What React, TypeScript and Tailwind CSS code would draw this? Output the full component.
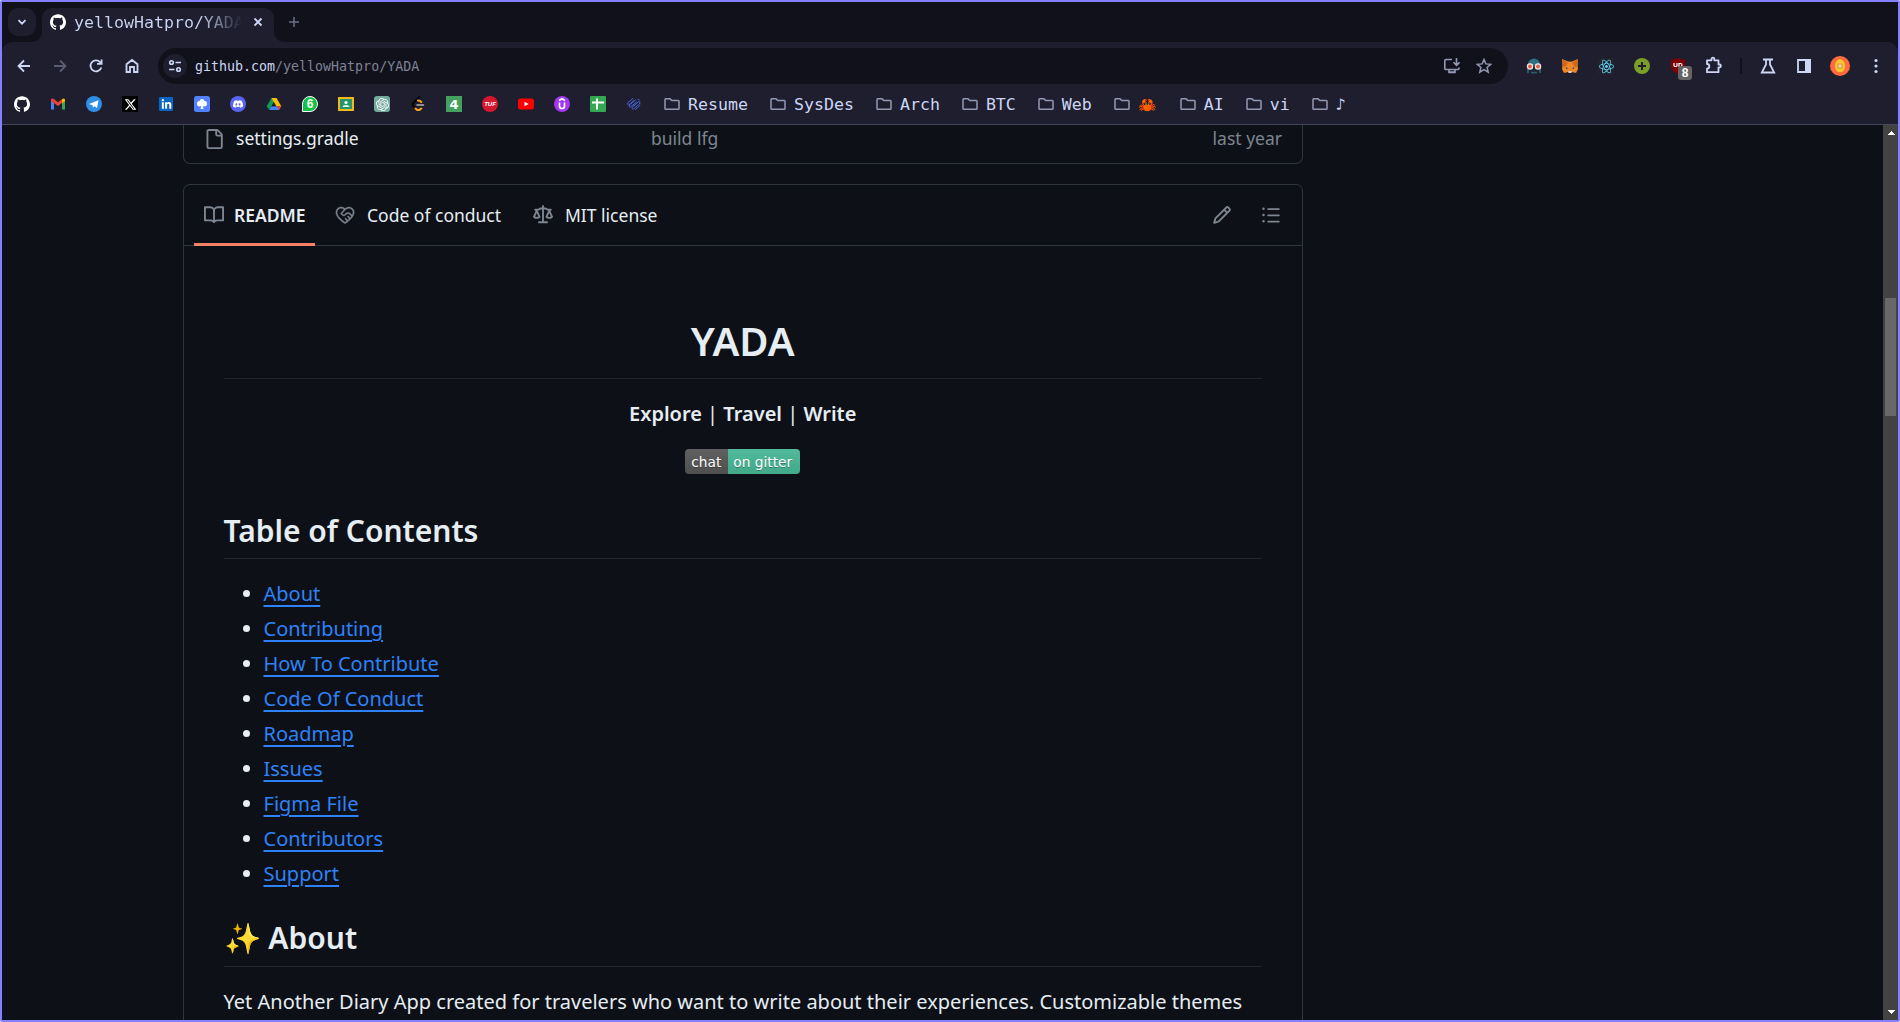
import type { ReactNode } from "react";
import { GoCodeOfConduct } from "react-icons/go";
import { SiDiscord, SiGithub, SiOpenai, SiReact } from "react-icons/si";
import { FaLinkedinIn } from "react-icons/fa";
import { FaXTwitter } from "react-icons/fa6";

const mono = "font-['DejaVu_Sans_Mono','Liberation_Mono',monospace]";

const octicons = {
  book: "M0 1.75A.75.75 0 0 1 .75 1h4.253c1.227 0 2.317.59 3 1.501A3.743 3.743 0 0 1 11.006 1h4.245a.75.75 0 0 1 .75.75v10.5a.75.75 0 0 1-.75.75h-4.507a2.25 2.25 0 0 0-1.591.659l-.622.621a.75.75 0 0 1-1.06 0l-.622-.621A2.25 2.25 0 0 0 5.258 13H.75a.75.75 0 0 1-.75-.75Zm7.251 10.324.004-5.073-.002-2.253A2.25 2.25 0 0 0 5.003 2.5H1.5v9h3.757a3.75 3.75 0 0 1 1.994.574ZM8.755 4.75l-.004 7.322a3.752 3.752 0 0 1 1.992-.572H14.5v-9h-3.495a2.25 2.25 0 0 0-2.25 2.25Z",
  file: "M2 1.75C2 .784 2.784 0 3.75 0h6.586c.464 0 .909.184 1.237.513l2.914 2.914c.329.328.513.773.513 1.237v9.586A1.75 1.75 0 0 1 13.25 16h-9.5A1.75 1.75 0 0 1 2 14.25Zm1.75-.25a.25.25 0 0 0-.25.25v12.5c0 .138.112.25.25.25h9.5a.25.25 0 0 0 .25-.25V6h-2.75A1.75 1.75 0 0 1 9 4.25V1.5Zm6.75.062V4.25c0 .138.112.25.25.25h2.688l-.011-.013-2.914-2.914-.013-.011Z",
  pencil: "M11.013 1.427a1.75 1.75 0 0 1 2.474 0l1.086 1.086a1.75 1.75 0 0 1 0 2.474l-8.61 8.61c-.21.21-.47.364-.756.445l-3.251.93a.75.75 0 0 1-.927-.928l.929-3.25c.081-.286.235-.547.445-.758l8.61-8.61Zm.176 4.823L9.75 4.81l-6.286 6.287a.253.253 0 0 0-.064.108l-.558 1.953 1.953-.558a.253.253 0 0 0 .108-.064Zm1.238-3.763a.25.25 0 0 0-.354 0L10.811 3.75l1.439 1.44 1.263-1.263a.25.25 0 0 0 0-.354Z",
  list: "M5.75 2.5h8.5a.75.75 0 0 1 0 1.5h-8.5a.75.75 0 0 1 0-1.5Zm0 5h8.5a.75.75 0 0 1 0 1.5h-8.5a.75.75 0 0 1 0-1.5Zm0 5h8.5a.75.75 0 0 1 0 1.5h-8.5a.75.75 0 0 1 0-1.5ZM2 14a1 1 0 1 1 0-2 1 1 0 0 1 0 2Zm1-6a1 1 0 1 1-2 0 1 1 0 0 1 2 0ZM2 4a1 1 0 1 1 0-2 1 1 0 0 1 0 2Z",
  law: "M8.75.75V2h.985c.304 0 .603.08.867.231l1.29.736c.038.022.08.033.124.033h2.234a.75.75 0 0 1 0 1.5h-.427l2.111 4.692a.75.75 0 0 1-.154.838l-.53-.53.529.531-.001.002-.002.002-.006.006-.006.005-.01.01-.045.04c-.21.176-.441.327-.686.45C14.556 10.78 13.88 11 13 11a4.498 4.498 0 0 1-2.023-.454 3.544 3.544 0 0 1-.686-.45l-.045-.04-.016-.015-.006-.006-.004-.004v-.001a.75.75 0 0 1-.154-.838L12.178 4.5h-.162c-.305 0-.604-.079-.868-.231l-1.29-.736a.245.245 0 0 0-.124-.033H8.75V13h2.5a.75.75 0 0 1 0 1.5h-6.5a.75.75 0 0 1 0-1.5h2.5V3.5h-.984a.245.245 0 0 0-.124.033l-1.289.737c-.265.15-.564.23-.869.23h-.162l2.112 4.692a.75.75 0 0 1-.154.838l-.53-.53.529.531-.001.002-.002.002-.006.006-.016.015-.045.04c-.21.176-.441.327-.686.45C4.556 10.78 3.88 11 3 11a4.498 4.498 0 0 1-2.023-.454 3.544 3.544 0 0 1-.686-.45l-.045-.04-.016-.015-.006-.006-.004-.004v-.001a.75.75 0 0 1-.154-.838L2.178 4.5H1.75a.75.75 0 0 1 0-1.5h2.234a.249.249 0 0 0 .125-.033l1.288-.737c.265-.15.564-.23.869-.23h.984V.75a.75.75 0 0 1 1.5 0Zm2.945 8.477c.285.135.718.273 1.305.273s1.02-.138 1.305-.273L13 6.327Zm-10 0c.285.135.718.273 1.305.273s1.02-.138 1.305-.273L3 6.327Z",
};

function Octicon({ name, className = "" }: { name: keyof typeof octicons; className?: string }) {
  return (
    <svg width="20" height="20" viewBox="0 0 16 16" fill="currentColor" className={`shrink-0 text-[#7d8590] ${className}`}>
      <path d={octicons[name]} />
    </svg>
  );
}

function Stroke({ children, className = "", w = 16, sw = 1.8 }: { children: ReactNode; className?: string; w?: number; sw?: number }) {
  return (
    <svg width={w} height={w} viewBox={`0 0 ${w} ${w}`} fill="none" stroke="currentColor" strokeWidth={sw} className={`shrink-0 ${className}`}>
      {children}
    </svg>
  );
}

function TabStrip() {
  return (
    <div className="flex h-10 shrink-0 items-start bg-[#11111b] pl-1.5 pt-1.5">
      <button className="flex size-7 items-center justify-center rounded-[10px] bg-[#1e1e2e] text-[#cdd6f4]">
        <Stroke w={10}>
          <path d="M1.5 3.2 5 6.7l3.5-3.5" />
        </Stroke>
      </button>
      <div className="relative ml-1.5 flex h-[34px] w-[232px] items-center rounded-t-[10px] bg-[#1e1e2e] pb-[6px] pl-2">
        <svg className="absolute -left-2.5 bottom-0 text-[#1e1e2e]" width="10" height="10">
          <path d="M10 0v10H0A10 10 0 0 0 10 0Z" fill="currentColor" />
        </svg>
        <svg className="absolute -right-2.5 bottom-0 text-[#1e1e2e]" width="10" height="10">
          <path d="M0 0v10h10A10 10 0 0 1 0 0Z" fill="currentColor" />
        </svg>
        <SiGithub size={16} className="shrink-0 text-white" />
        <span className={`${mono} ml-2 w-[168px] overflow-hidden whitespace-nowrap bg-gradient-to-r from-[#cdd6f4] from-75% to-transparent to-100% bg-clip-text pt-px text-[16.6px] leading-7 text-transparent`}>
          yellowHatpro/YADA
        </span>
        <Stroke w={10} className="ml-[11px] text-[#cdd6f4]">
          <path d="m1.5 1.5 7 7m0-7-7 7" />
        </Stroke>
      </div>
      <Stroke w={10} sw={1.5} className="ml-[15px] mt-[9px] text-[#6c7086]">
        <path d="M5 0v10M0 5h10" />
      </Stroke>
    </div>
  );
}

function Extensions() {
  return (
    <div className="flex items-center">
      <svg width="16" height="16" viewBox="0 0 16 16" className="ml-[18px]">
        <path d="M2 7.500V6.500a6 6 0 0 1 12 0v1Z" fill="#2f6f80" />
        <path d="M1 10h2v5H1zM13 10h2v5h-2zM5 13.500h6v2H5z" fill="#2c5a68" />
        <path d="M4 10h8v3.500H4z" fill="#1b2733" />
        <circle cx="4" cy="8.500" r="2.600" fill="#d9604d" stroke="#f1e6e2" strokeWidth="1.300" />
        <circle cx="12" cy="8.500" r="2.600" fill="#d9604d" stroke="#f1e6e2" strokeWidth="1.300" />
      </svg>
      <svg width="16" height="16" viewBox="0 0 16 16" className="ml-5">
        <path d="m0 1 6 2.5h4L16 1l-.5 6 .5 4-2 4-4-1H6l-4 1-2-4 .5-4Z" fill="#f0862a" />
        <path d="m0 1 6 4-3 4-2.5-1ZM16 1l-6 4 3 4 2.500-1Z" fill="#d0671b" />
        <path d="M6 13h4l-.5 2h-3Z" fill="#d8c9bb" />
        <path d="M3.500 9 6 10.500l-1.500.5ZM12.500 9 10 10.500l1.500.5Z" fill="#233447" />
      </svg>
      <div className="ml-5 flex size-4 items-center justify-center bg-[#20232a]">
        <SiReact size={15} className="text-[#61dafb]" />
      </div>
      <div className="ml-5 flex size-4 items-center justify-center rounded-full bg-[#7a9e26] text-[#1e1e2e]">
        <Stroke w={8} sw={2}>
          <path d="M4 0v8M0 4h8" />
        </Stroke>
      </div>
      <div className="relative ml-5 size-4">
        <svg width="16" height="16" viewBox="0 0 16 16">
          <path d="M8 0c2 1.500 5 1.500 7 1.500V8c0 4-3 6-7 8-4-2-7-4-7-8V1.500C3 1.500 6 1.500 8 0Z" fill="#800000" />
          <path d="M4 5v2.500q0 1 1 1h1q1 0 1-1V5M9 9V5.500h1.500q1.500 0 1.500 1.500T10.500 8.500" stroke="#fff" fill="none" strokeWidth="1.200" />
        </svg>
        <span className="absolute left-2 top-2 flex h-[14px] w-[14px] items-center justify-center rounded-[3px] bg-[#646464] font-['Liberation_Sans',sans-serif] text-[12px] font-bold leading-none text-white">
          8
        </span>
      </div>
      <Stroke w={20} className="ml-[18px] text-[#cdd6f4]">
        <path d="M3 4.300h4.500v-1.200a1.400 1.400 0 0 1 2.800 0v1.200h4.200v4.200h1a1.400 1.400 0 0 1 0 2.800h-1v4.900H3v-3.600a2.300 2.300 0 0 0 0-4.600Z" strokeLinejoin="round" />
      </Stroke>
      <span className="ml-4 h-4 w-0.5 bg-[#11111b]" />
      <Stroke className="ml-[18px] text-[#cdd6f4]">
        <path d="M3 1.500h10M6 1.500v5L1.800 14.500h12.400L10 6.500v-5" />
      </Stroke>
      <svg width="16" height="16" viewBox="0 0 16 16" className="ml-5 text-[#cdd6f4]">
        <path d="M2 2h12v12H2Z" fill="none" stroke="currentColor" strokeWidth="1.800" />
        <path d="M9 1h6v14H9Z" fill="currentColor" />
      </svg>
      <svg width="20" height="20" viewBox="0 0 20 20" className="ml-[18px]">
        <circle cx="10" cy="10" r="10" fill="#ff6b3d" />
        <path d="M10 3c3.500 1 5 4 5 7.500S13 16 10 16s-5-2-5-5.500S6.500 4 10 3Z" fill="#fbc531" />
        <path d="M8 8h4v4H8Z" fill="#e6dcc0" stroke="#d69a2b" />
      </svg>
      <svg width="4" height="16" viewBox="0 0 4 16" className="ml-6 text-[#cdd6f4]" fill="currentColor">
        <circle cx="2" cy="2.500" r="1.600" />
        <circle cx="2" cy="8" r="1.600" />
        <circle cx="2" cy="13.500" r="1.600" />
      </svg>
    </div>
  );
}

function Toolbar() {
  return (
    <div className="flex h-12 items-center pl-4">
      <Stroke className="-ml-0.5 text-[#cdd6f4]">
        <path d="M14 8H3M8 2.500 2.500 8 8 13.500" />
      </Stroke>
      <Stroke className="ml-5 text-[#5b5d72]">
        <path d="M2 8h11M8 2.500 13.500 8 8 13.500" />
      </Stroke>
      <Stroke className="ml-5 text-[#cdd6f4]">
        <path d="M13.300 9.500A5.500 5.500 0 1 1 12 4l1 1.200" />
        <path d="M13.600 1.500v4.400H9" />
      </Stroke>
      <Stroke className="ml-5 text-[#cdd6f4]">
        <path d="M2.500 14V6.200L8 2l5.500 4.200V14H10V9H6v5Z" />
      </Stroke>
      <div className="ml-[18px] flex h-9 w-[1350px] items-center rounded-full bg-[#11111b] pl-[5px] pr-4">
        <span className="flex size-[24px] shrink-0 items-center justify-center rounded-full bg-[#1e1e2e] text-[#cdd6f4]">
          <Stroke w={14} sw={1.6}>
            <circle cx="3.500" cy="3.500" r="1.800" />
            <path d="M7.500 3.500H13M1 10.500h5.500" />
            <circle cx="10.500" cy="10.500" r="1.800" />
          </Stroke>
        </span>
        <span className={`${mono} ml-2 grow pt-px text-[13.3px] text-[#7f8296]`}>
          <span className="text-[#cdd6f4]">github.com</span>/yellowHatpro/YADA
        </span>
        <Stroke className="text-[#9399b2]" sw={1.6}>
          <path d="M8 1.500H2Q.8 1.500.8 2.500v8.200q0 .8 1 .8h12q1.200 0 1.200-1.200V9.500M5 14h6M5 12v2.500h6V12M12.500 0v7M9.500 4.300l3 3 3-3" />
        </Stroke>
        <Stroke className="ml-4 text-[#9399b2]" sw={1.5}>
          <path d="m8 1.500 1.900 4.400 4.800.4-3.600 3.200 1.100 4.700L8 11.700l-4.200 2.500 1.100-4.700L1.300 6.300l4.800-.4Z" />
        </Stroke>
      </div>
      <Extensions />
    </div>
  );
}

const siteIcons: ReactNode[] = [
  <SiGithub size={16} className="text-white" />,
  <svg width="16" height="16" viewBox="0 0 16 16">
    <path d="M1 3v10.500h3V7Z" fill="#4285f4" />
    <path d="M15 3v10.500h-3V7Z" fill="#34a853" />
    <path d="M1 3.500Q1.500 2 3.500 2.800L8 6.300l4.500-3.500L12 7 8 10 1 5Z" fill="#ea4335" />
    <path d="M12 3.200q2-1.500 3 .3V5l-3 2.200Z" fill="#fbbc04" />
  </svg>,
  <svg width="16" height="16" viewBox="0 0 16 16">
    <circle cx="8" cy="8" r="8" fill="#2f8fe6" />
    <path d="m3 8 9.500-3.800L11 12 8.500 10.200 7 11.500 6.500 9.300Z" fill="#fff" />
  </svg>,
  <span className="flex size-4 items-center justify-center bg-black text-white">
    <FaXTwitter size={13} />
  </span>,
  <span className="flex size-3.5 items-center justify-center rounded-[1px] bg-[#0a66c2] text-white">
    <FaLinkedinIn size={11} />
  </span>,
  <svg width="16" height="16" viewBox="0 0 16 16">
    <rect width="16" height="16" rx="2.500" fill="#5182ff" />
    <path d="M8 3a2.500 2.500 0 0 1 2.400 2A2.800 2.800 0 0 1 13 8a2.500 2.500 0 0 1-4.300 1.700L9.500 13h-3l.8-3.300A2.500 2.500 0 0 1 3 8a2.800 2.800 0 0 1 2.600-3A2.500 2.500 0 0 1 8 3Z" fill="#fff" />
  </svg>,
  <span className="flex size-4 items-center justify-center rounded-full bg-[#5865f2] text-white">
    <SiDiscord size={10} />
  </span>,
  <svg width="16" height="16" viewBox="0 0 16 16">
    <path d="M5.500 2h5L8 6 3.200 14 .7 10.200Z" fill="#0f9d58" />
    <path d="M5.500 2h5l4.800 8.200H10Z" fill="#fbbc04" />
    <path d="M3.200 14 5.500 10.200h9.800L12.800 14Z" fill="#4285f4" />
    <path d="M10.500 10.200h4.800L13 14Z" fill="#ea4335" />
    <path d="m8 6.300 2.300 3.900H5.700Z" fill="#1e1e2e" />
  </svg>,
  <span className="flex size-4 items-center justify-center rounded-full rounded-bl-[2px] border border-white bg-[#12c245] font-['Liberation_Sans',sans-serif] text-[12px] font-bold leading-none text-white">
    6
  </span>,
  <svg width="16" height="16" viewBox="0 0 16 16">
    <path d="M0 1h16v14H0Z" fill="#f4b916" />
    <path d="M2 3h12v10H2Z" fill="#23966f" />
    <circle cx="8" cy="6.500" r="1.600" fill="#fff" />
    <path d="M4.500 11q0-2 3.500-2t3.500 2Z" fill="#dff3e9" />
  </svg>,
  <span className="flex size-4 items-center justify-center rounded-[3px] bg-[#74aa9c] text-white">
    <SiOpenai size={13} />
  </span>,
  <svg width="16" height="16" viewBox="0 0 16 16" fill="none" strokeWidth="2" strokeLinecap="round">
    <path d="M9.500 1 3 7.300q-1 1.200 0 2.400L5.500 12.500" stroke="#050505" />
    <path d="M8 4.500q1.500-.3 3.300 1.500M5.500 12.500l1.500 1.300q2 1 4.300-1.300" stroke="#ffa116" />
    <path d="M7 9h6.500" stroke="#b3b3b3" strokeWidth="1.500" />
  </svg>,
  <span className="flex size-4 items-center justify-center bg-[#43a05f] font-['DejaVu_Sans',sans-serif] text-[13px] font-bold leading-none text-white">
    4
  </span>,
  <span className="flex size-4 items-center justify-center rounded-full bg-[#d6162f] font-['Liberation_Sans',sans-serif] text-[6px] font-bold italic leading-none text-white">
    TUF
  </span>,
  <svg width="16" height="16" viewBox="0 0 16 16">
    <rect y="2.500" width="16" height="11" rx="2.500" fill="#f00" />
    <path d="m6.500 5.800 4 2.200-4 2.200Z" fill="#fff" />
  </svg>,
  <svg width="16" height="16" viewBox="0 0 16 16">
    <circle cx="8" cy="8" r="8" fill="#a435f0" />
    <path d="M5 4.500 8 2.700l3 1.800M5.500 6.500v3.700q0 2.300 2.500 2.300t2.500-2.300V6.500" fill="none" stroke="#fff" strokeWidth="1.700" />
  </svg>,
  <svg width="16" height="16" viewBox="0 0 16 16">
    <rect width="16" height="16" rx="1" fill="#34a853" />
    <path d="M2 6.500h12M7 2.500v11" stroke="#fff" strokeWidth="2" />
  </svg>,
  <svg width="16" height="16" viewBox="0 0 16 16" fill="none" stroke="#4a62d8" strokeWidth="1" strokeLinecap="round">
    <path d="M7 2.500 2 6.500q-1.500 2 .5 2.500L8 4.500M9.500 4 3.500 9q-1 2.500 1 2l6-5M11 7l-5 4.500q-.5 2 1.500 1.500L13.500 8q1.500-2-.5-2.500L7.500 10M9.500 13.500l4.500-4M12 3.500q1.500-.5 1.500.5" />
  </svg>,
];

const folders = ["Resume", "SysDes", "Arch", "BTC", "Web", "🦀", "AI", "vi", "♪"];

function Bookmarks() {
  return (
    <div className="flex h-[34px] items-center pb-[6px] pl-3">
      <div className="flex gap-5">
        {siteIcons.map((icon, i) => (
          <span key={i} className="flex size-4 items-center justify-center">
            {icon}
          </span>
        ))}
      </div>
      <div className="ml-[22px] flex gap-[22px]">
        {folders.map((name) => (
          <span key={name} className="flex h-5 items-center gap-2">
            <Stroke className="text-[#9399b2]" sw={1.5}>
              <path d="M1 3.500Q1 2.700 1.800 2.700H6l1.700 1.800h6.500q.8 0 .8.800v7.200q0 .8-.8.800H1.800q-.8 0-.8-.8Z" />
            </Stroke>
            <span className={`${mono} pt-0.5 leading-5 text-[#cdd6f4] ${name === "🦀" ? "w-5 text-[15px]" : "text-[16.6px]"}`}>{name}</span>
          </span>
        ))}
      </div>
    </div>
  );
}

function ReadmeHeader() {
  return (
    <div className="flex h-[61px] items-center border-b border-[#30363d] px-2.5 text-[17.5px] text-[#e6edf3]">
      <div className="relative flex h-[60px] w-[121px] items-center pl-2.5 font-semibold">
        <Octicon name="book" />
        <span className="ml-2.5">README</span>
        <span className="absolute -bottom-px left-0 h-[3px] w-full bg-[#f78166]" />
      </div>
      <div className="ml-5 flex items-center">
        <GoCodeOfConduct size={20} className="text-[#7d8590]" stroke="currentColor" strokeWidth={0.5} />
        <span className="ml-3 w-[166px]">Code of conduct</span>
        <Octicon name="law" />
        <span className="ml-3">MIT license</span>
      </div>
      <Octicon name="pencil" className="ml-auto" />
      <Octicon name="list" className="ml-[29px] mr-[11px]" />
    </div>
  );
}

const toc = ["About", "Contributing", "How To Contribute", "Code Of Conduct", "Roadmap", "Issues", "Figma File", "Contributors", "Support"];

function Readme() {
  return (
    <article className="pl-[39.5px] pr-10 pt-[70px] text-[20px] leading-[30px] text-[#e6edf3]">
      <h1 className="border-b border-[#21262d] pb-3 text-center text-[40px] font-semibold leading-[50px]">YADA</h1>
      <p className="mt-5 text-center">
        <b className="font-semibold">Explore</b> | <b className="font-semibold">Travel</b> | <b className="font-semibold">Write</b>
      </p>
      <div className="mt-5 flex h-8 justify-center pr-px">
        <div className="flex h-[25px] overflow-hidden rounded-[4px] font-['DejaVu_Sans',sans-serif] text-[13.75px] leading-[26px] text-white [text-shadow:0_1px_0_rgba(1,1,1,0.3)]">
          <span className="w-[43px] bg-gradient-to-b from-[#606060] to-[#4f4f4f] text-center">chat</span>
          <span className="w-[72px] bg-gradient-to-b from-[#51bb9c] to-[#41a888] pr-0.5 text-center">on gitter</span>
        </div>
      </div>
      <h2 className="mt-[30.500px] border-b border-[#21262d] pb-[9px] text-[30px] font-semibold leading-[37.5px]">Table of Contents</h2>
      <ul className="mt-5 list-disc space-y-[5px] pl-10">
        {toc.map((item) => (
          <li key={item}>
            <a className="text-[#2f81f7] underline decoration-2 underline-offset-4">{item}</a>
          </li>
        ))}
      </ul>
      <h2 className="mt-[30px] border-b border-[#21262d] pb-[9px] text-[30px] font-semibold leading-[37.5px]">✨ About</h2>
      <p className="mt-5 whitespace-nowrap">
        Yet Another Diary App created for travelers who want to write about their experiences. Customizable themes
      </p>
    </article>
  );
}

export default function App() {
  return (
    <div className="flex h-[1022px] w-[1900px] flex-col overflow-hidden rounded-[2px] border-2 border-[#8580ff] bg-[#11111b]">
      <TabStrip />
      <div className="h-[83px] shrink-0 rounded-t-[10px] border-b border-[#45475a] bg-[#1e1e2e]">
        <Toolbar />
        <Bookmarks />
      </div>
      <div className="flex min-h-0 grow bg-[#0d1117]">
        <main className="min-w-0 grow overflow-hidden pl-[181px] font-['Noto_Sans',sans-serif]">
          <div className="flex h-[39px] w-[1120px] items-center rounded-b-[7px] border border-t-0 border-[#30363d] px-5 pb-[11px] text-[17.5px] text-[#7d8590]">
            <Octicon name="file" />
            <span className="ml-3 w-[415px] text-[#e6edf3]">settings.gradle</span>
            <span>build lfg</span>
            <span className="ml-auto">last year</span>
          </div>
          <section className="mt-5 h-[900px] w-[1120px] rounded-t-[7px] border border-[#30363d]">
            <ReadmeHeader />
            <Readme />
          </section>
        </main>
        <div className="flex w-[15px] shrink-0 flex-col items-center bg-[#424242] text-white">
          <svg width="8" height="4" className="mt-[6px]" shapeRendering="crispEdges">
            <path d="M0 4 4 0l4 4Z" fill="currentColor" />
          </svg>
          <div className="mt-[163px] h-[118px] w-[11px] bg-[#686868]" />
          <svg width="8" height="4" className="mb-[6px] mt-auto" shapeRendering="crispEdges">
            <path d="m0 0 4 4 4-4Z" fill="currentColor" />
          </svg>
        </div>
      </div>
    </div>
  );
}
